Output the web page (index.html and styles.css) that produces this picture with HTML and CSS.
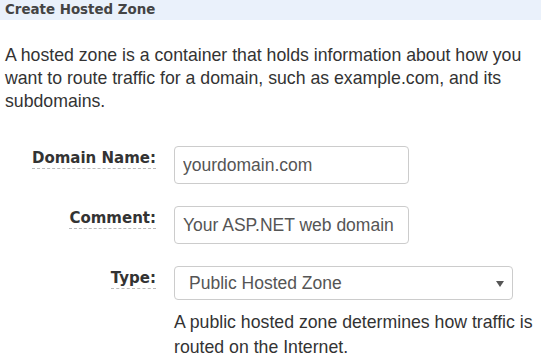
FILE: index.html
```html
<!DOCTYPE html>
<html lang="en">
<head>
	<meta charset="UTF-8">
	<title>Create Hosted Zone</title>
	<link rel="stylesheet" href="styles.css">
</head>
<body>
	<div class="panel">
		<div class="panel-header">Create Hosted Zone</div>

		<p class="intro">A hosted zone is a container that holds information about how you want to route traffic for a domain, such as example.com, and its subdomains.</p>

		<div class="form">
			<div class="row">
				<div class="label-col"><label class="label" for="domain">Domain Name:</label></div>
				<div class="field-col">
					<input class="input" id="domain" type="text" value="yourdomain.com">
				</div>
			</div>
			<div class="row">
				<div class="label-col"><label class="label" for="comment">Comment:</label></div>
				<div class="field-col">
					<input class="input" id="comment" type="text" value="Your ASP.NET web domain">
				</div>
			</div>
			<div class="row">
				<div class="label-col"><label class="label" for="type">Type:</label></div>
				<div class="field-col">
					<div class="select-wrap">
						<select class="select" id="type">
							<option>Public Hosted Zone</option>
							<option>Private Hosted Zone for Amazon VPC</option>
						</select>
					</div>
					<div class="help">A public hosted zone determines how traffic is routed on the Internet.</div>
				</div>
			</div>
		</div>
	</div>
</body>
</html>
```

FILE: styles.css
```css
body {
	margin: 0;
	background: #fff;
	font-family: "Liberation Sans", Arial, sans-serif;
	color: #333;
}

.panel-header {
	height: 20px;
	line-height: 20px;
	padding-left: 5px;
	background: #eaf1fb;
	color: #444;
	font-family: "DejaVu Sans", Verdana, sans-serif;
	font-weight: bold;
	font-size: 13.4px;
}

.intro {
	margin: 24px 5px 0 5px;
	font-size: 17.7px;
	line-height: 23px;
}

.form {
	margin-top: 33px;
	display: flex;
	flex-direction: column;
	row-gap: 22px;
}

.row {
	display: flex;
	column-gap: 18px;
}

.label-col {
	width: 156px;
	flex: none;
	text-align: right;
	padding-top: 2px;
}

.label {
	display: inline-block;
	font-family: "DejaVu Sans", Verdana, sans-serif;
	font-weight: bold;
	font-size: 15px;
	line-height: 20px;
	color: #333;
	border-bottom: 1px dashed #bbb;
}

.input {
	box-sizing: border-box;
	width: 235px;
	height: 38px;
	margin: 0;
	padding: 0 8px;
	border: 1px solid #ccc;
	border-radius: 4px;
	font-family: "Liberation Sans", Arial, sans-serif;
	font-size: 17.5px;
	color: #555;
	background: #fff;
}

.select-wrap {
	position: relative;
	width: 339px;
}

.select-wrap::after {
	content: "";
	position: absolute;
	right: 9px;
	top: 15px;
	border-left: 4px solid transparent;
	border-right: 4px solid transparent;
	border-top: 6px solid #555;
	pointer-events: none;
}

.select {
	-webkit-appearance: none;
	appearance: none;
	box-sizing: border-box;
	width: 100%;
	height: 34px;
	margin: 0;
	padding: 0 14px;
	border: 1px solid #ccc;
	border-radius: 4px;
	font-family: "Liberation Sans", Arial, sans-serif;
	font-size: 17.5px;
	color: #555;
	background: #fff;
}

.help {
	margin-top: 10px;
	font-size: 17.7px;
	line-height: 25px;
	color: #333;
}
```
